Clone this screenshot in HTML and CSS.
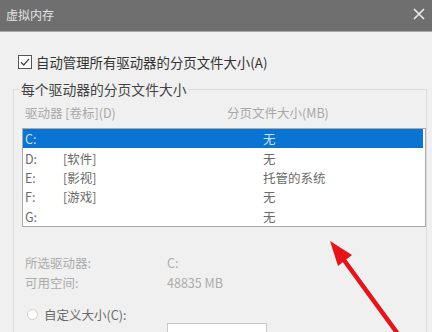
FILE: index.html
```html
<!DOCTYPE html>
<html lang="zh-CN">
<head>
<meta charset="utf-8">
<link rel="stylesheet" href="styles.css">
</head>
<body>
<div class="window">
  <div class="titlebar">
    <span class="title">虚拟内存</span>
    <svg class="close" width="12" height="12" viewBox="0 0 12 12"><path d="M1 1L11 11M11 1L1 11" stroke="#ececec" stroke-width="1.6" fill="none"/></svg>
  </div>
  <div class="content">
    <label class="auto-row">
      <span class="checkbox"><svg width="12" height="12" viewBox="0 0 12 12"><path d="M2 6.2L4.8 9L10 2.8" stroke="#444" stroke-width="1.3" fill="none"/></svg></span>
      <span class="auto-text">自动管理所有驱动器的分页文件大小(A)</span>
    </label>
    <fieldset class="group">
      <legend class="group-title">每个驱动器的分页文件大小</legend>
      <div class="col-head">
        <span>驱动器 [卷标](D)</span>
        <span>分页文件大小(MB)</span>
      </div>
      <div class="listbox">
        <div class="row selected"><span>C:</span><span></span><span>无</span></div>
        <div class="row"><span>D:</span><span>[软件]</span><span>无</span></div>
        <div class="row"><span>E:</span><span>[影视]</span><span>托管的系统</span></div>
        <div class="row"><span>F:</span><span>[游戏]</span><span>无</span></div>
        <div class="row"><span>G:</span><span></span><span>无</span></div>
      </div>
      <div class="info">
        <div class="info-row"><span>所选驱动器:</span><span>C:</span></div>
        <div class="info-row"><span>可用空间:</span><span>48835 MB</span></div>
      </div>
      <label class="radio-row">
        <span class="radio"></span>
        <span>自定义大小(C):</span>
      </label>
      <div class="input-row"><span class="input"></span></div>
    </fieldset>
  </div>
  <svg class="arrow" width="432" height="332" viewBox="0 0 432 332">
    <line x1="406" y1="345" x2="341" y2="256" stroke="#e4141a" stroke-width="4.5" stroke-linecap="round"/>
    <polygon points="330,241 352,255 338,266" fill="#e4141a"/>
  </svg>
</div>
</body>
</html>
```

FILE: styles.css
```css
* { box-sizing: border-box; }
html, body {
  margin: 0;
  padding: 0;
  width: 432px;
  height: 332px;
  overflow: hidden;
  background: #f0f0f0;
  font-family: "Noto Sans CJK SC", "Noto Sans", sans-serif;
}
.window {
  position: relative;
  width: 432px;
  height: 332px;
  overflow: hidden;
  background: #f0f0f0;
}
.titlebar {
  height: 32px;
  background: #6f6f6f;
  border-bottom: 1px solid #a9a9a9;
  display: flex;
  align-items: center;
  justify-content: space-between;
  padding: 0 7px 2px 6px;
}
.title {
  color: #e4e4e4;
  font-size: 12px;
  line-height: 16px;
}
.close { display: block; margin-top: -2px; }
.content {
  padding: 21px 5px 0 13px;
}
.auto-row {
  display: flex;
  align-items: center;
  gap: 4px;
  height: 18px;
  padding-left: 5px;
}
.checkbox {
  width: 14px;
  height: 14px;
  border: 1px solid #555;
  background: #fff;
  display: flex;
  align-items: center;
  justify-content: center;
}
.auto-text {
  font-size: 13.4px;
  line-height: 18px;
  color: #333;
}
.group {
  margin: 9px 0 0 0;
  border: 1px solid #dcdcdc;
  padding: 0 0 0 6px;
  min-width: 0;
  height: 300px;
}
.group-title {
  font-size: 13.8px;
  line-height: 18px;
  color: #444;
  padding: 0 1px;
}
.col-head {
  display: grid;
  grid-template-columns: 202px 1fr;
  margin: 6px 0 0 5px;
  font-size: 12.5px;
  line-height: 18px;
  color: #a8a8a8;
}
.listbox {
  margin: 6px 0 0 2px;
  width: 404px;
  border: 1px solid #aaa;
  background: #fff;
}
.row {
  display: grid;
  grid-template-columns: 38px 200px 1fr;
  height: 19.4px;
  align-items: center;
  padding-left: 2px;
  font-size: 12.5px;
  color: #6a6a6a;
}
.row.selected {
  background: #0a74d2;
  color: #cfe0f3;
  margin-right: 2px;
}
.info {
  margin: 26px 0 0 5px;
}
.info-row {
  display: grid;
  grid-template-columns: 142px 1fr;
  font-size: 12.5px;
  line-height: 20px;
  color: #ababab;
}
.radio-row {
  display: flex;
  align-items: center;
  gap: 6px;
  height: 17px;
  margin: 13px 0 0 7px;
  font-size: 12.5px;
  color: #6a6a6a;
}
.radio {
  width: 11px;
  height: 11px;
  border-radius: 50%;
  border: 1px solid #d0d0d0;
  background: #fff;
}
.input-row {
  padding-left: 147px;
}
.input {
  display: block;
  width: 100px;
  height: 20px;
  border: 1px solid #c8c8c8;
  background: #fff;
}
.arrow {
  position: absolute;
  left: 0;
  top: 0;
  pointer-events: none;
}
```
